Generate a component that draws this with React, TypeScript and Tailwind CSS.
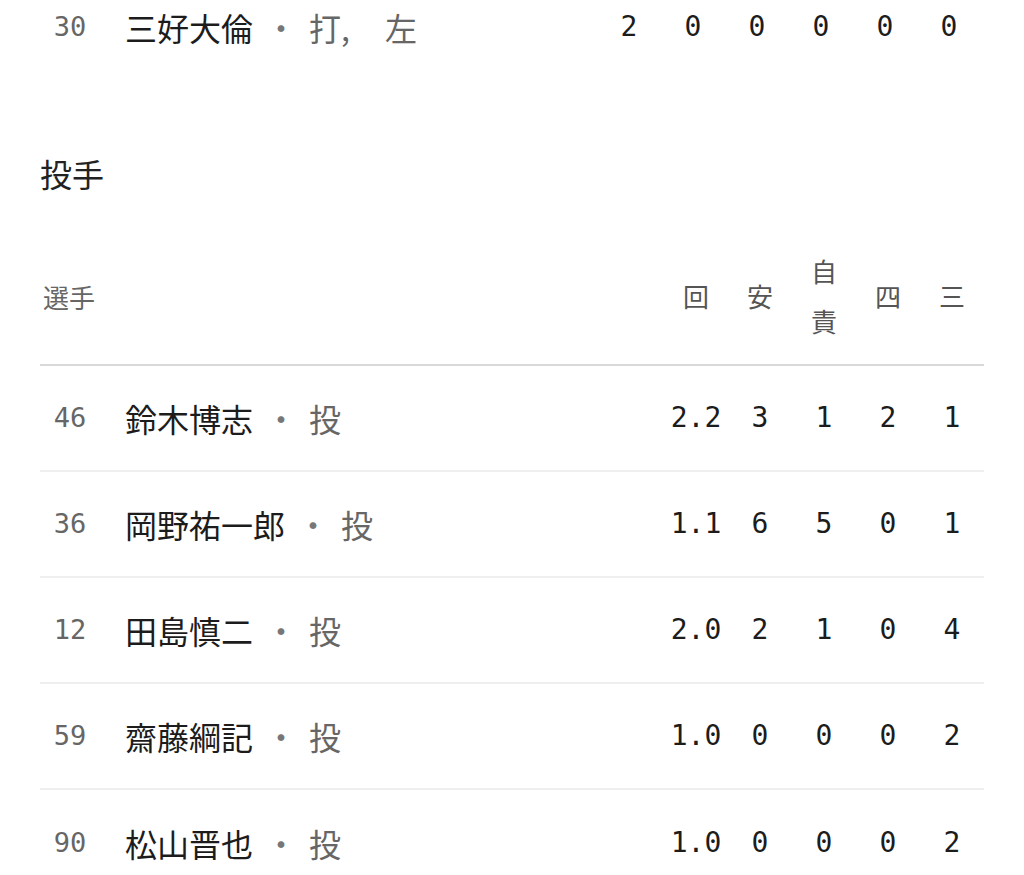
const batter = { no: "30", name: "三好大倫", pos: "打, 左", stats: ["2", "0", "0", "0", "0", "0"] };

const pitcherCols = [["回"], ["安"], ["自", "責"], ["四"], ["三"]];

const pitchers = [
  { no: "46", name: "鈴木博志", pos: "投", stats: ["2.2", "3", "1", "2", "1"] },
  { no: "36", name: "岡野祐一郎", pos: "投", stats: ["1.1", "6", "5", "0", "1"] },
  { no: "12", name: "田島慎二", pos: "投", stats: ["2.0", "2", "1", "0", "4"] },
  { no: "59", name: "齋藤綱記", pos: "投", stats: ["1.0", "0", "0", "0", "2"] },
  { no: "90", name: "松山晋也", pos: "投", stats: ["1.0", "0", "0", "0", "2"] },
];

const cjk = "font-['Noto_Sans_CJK_JP',sans-serif]";
const mono = "font-['DejaVu_Sans_Mono','Noto_Sans_CJK_JP',monospace]";

function PlayerRow({
  no,
  name,
  pos,
  stats,
  last,
}: {
  no: string;
  name: string;
  pos: string;
  stats: string[];
  last?: boolean;
}) {
  return (
    <div
      className={`flex h-[106px] items-center ${last ? "" : "border-b-2 border-[#efefef]"}`}
    >
      <div className={`w-[60px] text-center text-[27px] text-[#666] ${mono}`}>{no}</div>
      <div className={`ml-[25px] flex flex-1 items-center text-[32px] ${cjk}`}>
        <span className="text-[#1c1c1c]">{name}</span>
        <span className="mx-[12px] text-[#777]">・</span>
        <span className="text-[#666] [word-spacing:28px]">{pos}</span>
      </div>
      {stats.map((s, i) => (
        <div key={i} className={`w-16 text-center text-[28px] text-[#1c1c1c] ${mono}`}>
          {s}
        </div>
      ))}
    </div>
  );
}

export default function App() {
  return (
    <div className="min-h-screen bg-white px-10 text-[#1c1c1c]">
      <div className="-mt-[26px] pr-[3px]">
        <PlayerRow {...batter} last />
      </div>

      <h2 className={`mt-[69px] text-[32px] leading-[48px] text-[#222] ${cjk}`}>投手</h2>

      <div className="mt-[31px]">
        <div className="flex items-center border-b-2 border-[#d9d9d9] py-[18px]">
          <div className={`flex-1 pl-[3px] text-[26px] text-[#666] ${cjk}`}>選手</div>
          {pitcherCols.map((lines, i) => (
            <div
              key={i}
              className={`flex w-16 flex-col items-center text-[26px] leading-[50px] text-[#555] ${cjk}`}
            >
              {lines.map((c) => (
                <span key={c}>{c}</span>
              ))}
            </div>
          ))}
        </div>
        {pitchers.map((p, i) => (
          <PlayerRow key={p.no} {...p} last={i === pitchers.length - 1} />
        ))}
      </div>
    </div>
  );
}
